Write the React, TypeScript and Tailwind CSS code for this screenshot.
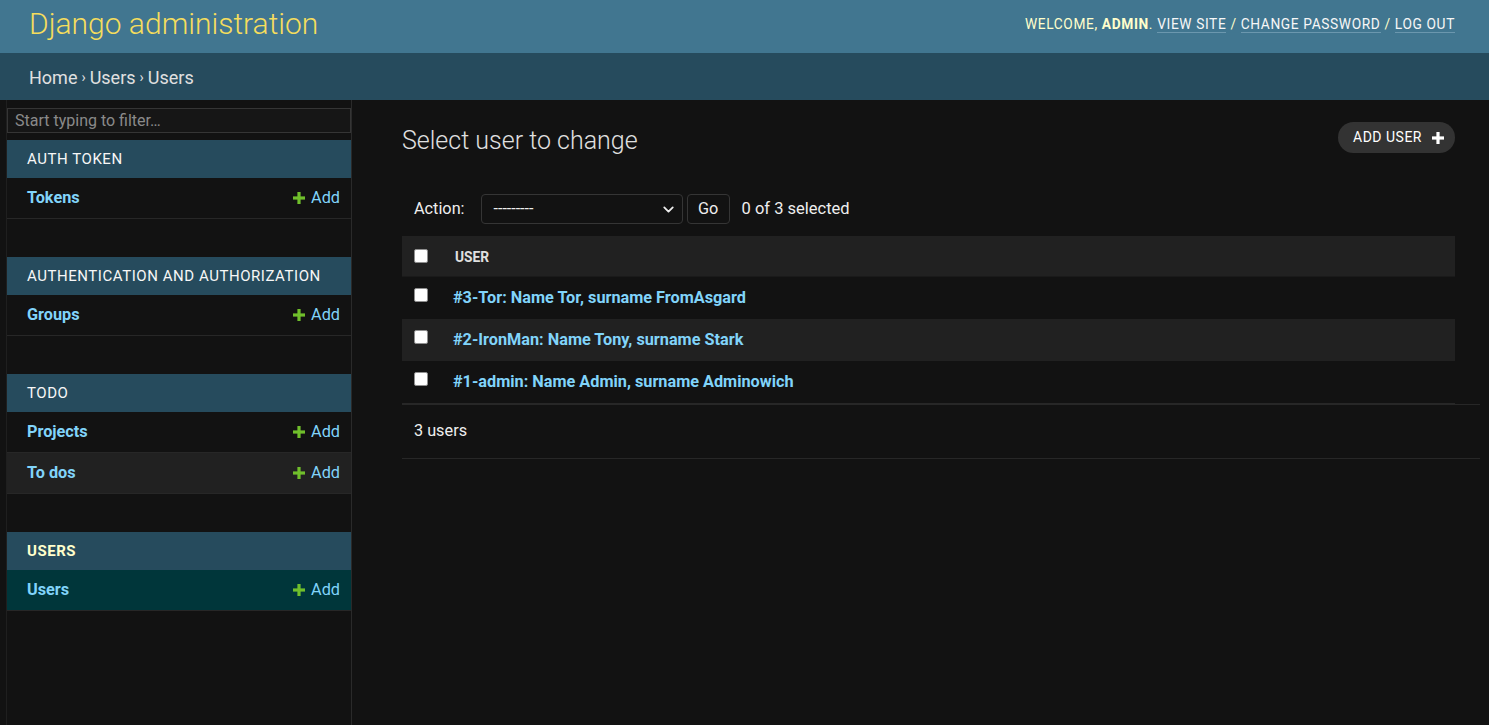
import { ChevronDown } from "lucide-react";

const font = { fontFamily: "Roboto, 'Noto Sans', sans-serif" };

type Model = { name: string; current?: boolean };
type App_ = { caption: string; models: Model[]; current?: boolean };

const apps: App_[] = [
    { caption: "Auth Token", models: [{ name: "Tokens" }] },
    { caption: "Authentication and Authorization", models: [{ name: "Groups" }] },
    { caption: "Todo", models: [{ name: "Projects" }, { name: "To dos" }] },
    { caption: "Users", current: true, models: [{ name: "Users", current: true }] },
];

const users = [
    "#3-Tor: Name Tor, surname FromAsgard",
    "#2-IronMan: Name Tony, surname Stark",
    "#1-admin: Name Admin, surname Adminowich",
];

function Plus({ className }: { className?: string }) {
    return (
        <svg viewBox="0 0 12 12" className={className} fill="currentColor">
            <rect x="4.4" y="0" width="3.2" height="12" />
            <rect x="0" y="4.4" width="12" height="3.2" />
        </svg>
    );
}

function Checkbox() {
    return <div className="w-[14px] h-[14px] rounded-[2px] bg-white border border-[#8f8f8f]" />;
}

function Sidebar() {
    return (
        <aside className="w-[352px] shrink-0 pl-[6px]">
            <div className="h-full border-l border-r border-[#1f1f1f] border-r-[#2a2a2a] pt-[8px]">
                <input
                    placeholder="Start typing to filter…"
                    className="block w-full h-[25px] px-[7px] bg-[#161616] border border-[#353535] text-[16px] text-[#eee] placeholder:text-[#8a8a8a] outline-none"
                    style={font}
                />
                <div className="mt-[7px]">
                    {apps.map((app) => (
                        <div key={app.caption} className="mb-[38px]">
                            <div
                                className={`h-[38px] flex items-center px-[20px] pt-[1px] bg-[#264b5d] uppercase tracking-[0.55px] text-[15px] ${
                                    app.current ? "text-[#ffffcc] font-bold" : "text-[#f7f7f7]"
                                }`}
                            >
                                {app.caption}
                            </div>
                            {app.models.map((m, i) => (
                                <div
                                    key={m.name}
                                    className={`h-[41px] flex items-center justify-between pl-[20px] pr-[11px] border-b border-[#272727] ${
                                        m.current ? "bg-[#00363a]" : i % 2 === 1 ? "bg-[#212121]" : "bg-[#121212]"
                                    }`}
                                >
                                    <span className="text-[16.25px] font-bold text-[#81d4fa]">{m.name}</span>
                                    <span className="flex items-center gap-[6px] text-[16.25px] text-[#81d4fa]">
                                        <Plus className="w-[12px] h-[12px] text-[#70bf2b]" />
                                        Add
                                    </span>
                                </div>
                            ))}
                        </div>
                    ))}
                </div>
            </div>
        </aside>
    );
}

export default function App() {
    return (
        <div className="min-h-screen bg-[#121212] text-[#eeeeee] flex flex-col" style={font}>
            <header className="h-[53px] bg-[#417690] flex items-center justify-between pl-[29px] pr-[34px] pb-[5px]">
                <h1 className="text-[30px] font-light text-[#f5dd5d] leading-none">Django administration</h1>
                <div className="text-[13.75px] tracking-[0.62px] uppercase text-[#ffffcc] mt-[1px]">
                    Welcome, <strong className="font-bold">admin</strong>.{" "}
                    <a className="text-[#f7f7f7] border-b border-[#6b97ae]">View site</a> /{" "}
                    <a className="text-[#f7f7f7] border-b border-[#6b97ae]">Change password</a> /{" "}
                    <a className="text-[#f7f7f7] border-b border-[#6b97ae]">Log out</a>
                </div>
            </header>
            <div className="h-[47px] bg-[#264b5d] flex items-center px-[29px] pt-[2px] text-[18px] text-[#e0e0e0]">
                <span>Home</span>
                <span className="mx-[4px] text-[14px]">›</span>
                <span>Users</span>
                <span className="mx-[4px] text-[14px]">›</span>
                <span>Users</span>
            </div>

            <div className="flex flex-1">
                <Sidebar />
                <main className="flex-1 pl-[50px] pr-[34px] pt-[22px]">
                    <div className="flex items-center justify-between h-[31px]">
                        <h2 className="text-[25px] font-light text-[#e0e0e0] mt-[6px]">Select user to change</h2>
                        <button className="h-[31px] pl-[15px] pr-[11px] rounded-full bg-[#333333] flex items-center gap-[10px] text-[14px] tracking-[0.5px] text-white">
                            ADD USER
                            <Plus className="w-[12px] h-[12px]" />
                        </button>
                    </div>

                    <div className="mt-[41px] flex items-center h-[30px] pl-[12px] text-[16.25px]">
                        <span>Action:</span>
                        <div className="ml-[16px] w-[202px] h-[30px] border border-[#353535] rounded-[4px] flex items-center justify-between pl-[12px] pr-[5px]">
                            <span className="text-[16px]">---------</span>
                            <ChevronDown className="w-[17px] h-[17px]" strokeWidth={2.5} />
                        </div>
                        <button className="ml-[4px] w-[43px] h-[30px] border border-[#353535] rounded-[4px] text-[16.25px]">Go</button>
                        <span className="ml-[12px] text-[16.5px]">0 of 3 selected</span>
                    </div>

                    <div className="mt-[12px]">
                        <div className="h-[41px] bg-[#212121] flex items-center border-b border-[#1a1a1a]">
                            <div className="w-[53px] pl-[12px] -mt-[1px]">
                                <Checkbox />
                            </div>
                            <span className="text-[13.75px] font-bold uppercase text-[#e0e0e0] mt-[2px]">User</span>
                        </div>
                        {users.map((u, i) => (
                            <div
                                key={u}
                                className={`h-[42px] flex items-center ${i % 2 === 1 ? "bg-[#212121]" : "bg-[#121212]"}`}
                            >
                                <div className="w-[51px] pl-[12px] -mt-[6px]">
                                    <Checkbox />
                                </div>
                                <a className="text-[16.25px] font-bold text-[#81d4fa]">{u}</a>
                            </div>
                        ))}
                        <div className="h-[2px] bg-[#272727]" />
                    </div>
                    <div className="mr-[-25px] h-[55px] flex items-center pl-[12px] border-t border-b border-[#272727] text-[16.25px] -mt-[1px]">
                        3 users
                    </div>
                </main>
            </div>
        </div>
    );
}
